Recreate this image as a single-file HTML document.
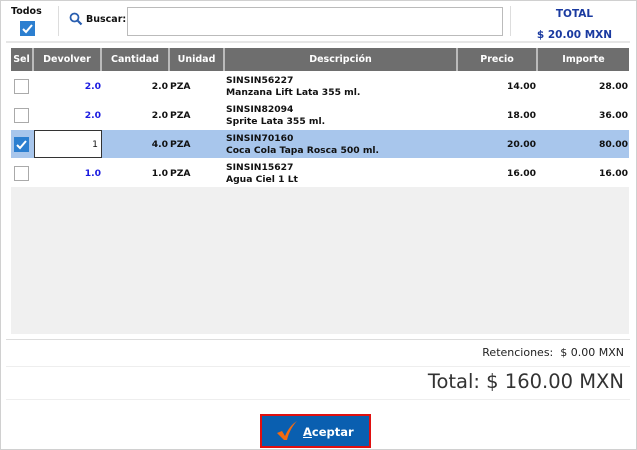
<!DOCTYPE html>
<html><head><meta charset="utf-8"><style>
*{margin:0;padding:0;box-sizing:border-box}
body{width:637px;height:450px;background:#fff;font-family:"DejaVu Sans","Liberation Sans",sans-serif;font-weight:bold;font-size:9.2px;color:#111;position:relative;overflow:hidden;border:1px solid #d0d0d0}
.a{position:absolute;white-space:nowrap}
.hd{background:#6e6e6e;color:#fff;text-align:center;top:47px;height:23px;line-height:23px;font-size:9.5px;border-right:2px solid #bbb}
.cb{width:15px;height:15px;border:1px solid #aaa;background:#fff}
.cbk{background:#2c7fd0;border-color:#2c7fd0}
.r{text-align:right}
</style></head><body>
<div class="a" style="left:10px;top:5px;font-size:9.5px">Todos</div>
<div class="a cb cbk" style="left:19px;top:20px"><svg width="13" height="13" viewBox="0 0 13 13"><path d="M2 7l3 3 6-7" stroke="#fff" stroke-width="2" fill="none"/></svg></div>
<div class="a" style="left:57px;top:5px;width:1px;height:30px;background:#ddd"></div>
<svg class="a" style="left:68px;top:11px" width="14" height="14" viewBox="0 0 14 14"><circle cx="5.5" cy="5.5" r="4" stroke="#2a5fb0" stroke-width="1.8" fill="none"/><path d="M8.5 8.5l4 4" stroke="#2a5fb0" stroke-width="2.2"/></svg>
<div class="a" style="left:85px;top:13px;font-size:9.5px">Buscar:</div>
<div class="a" style="left:126px;top:6px;width:376px;height:29px;border:1px solid #bbb"></div>
<div class="a" style="left:509px;top:5px;width:1px;height:30px;background:#ddd"></div>
<div class="a" style="left:510px;top:3px;width:127px;text-align:center;color:#1a3aa0;font-size:10.5px;line-height:21px">TOTAL<br>$ 20.00 MXN</div>
<div class="a" style="left:5px;top:40px;width:624px;height:2px;background:#e6e6e6"></div>

<div class="a hd" style="left:10px;width:23px">Sel</div>
<div class="a hd" style="left:33px;width:68px">Devolver</div>
<div class="a hd" style="left:101px;width:68px">Cantidad</div>
<div class="a hd" style="left:169px;width:55px">Unidad</div>
<div class="a hd" style="left:224px;width:233px">Descripción</div>
<div class="a hd" style="left:457px;width:80px">Precio</div>
<div class="a hd" style="left:537px;width:91px;border-right:none">Importe</div>

<div class="a" style="left:10px;top:129px;width:618px;height:28px;background:#a8c6ec"></div>
<div class="a" style="left:10px;top:186px;width:618px;height:147px;background:#f0f0f0"></div>

<div class="a cb" style="left:13px;top:78px"></div>
<div class="a cb" style="left:13px;top:107px"></div>
<div class="a cb cbk" style="left:13px;top:136px"><svg width="13" height="13" viewBox="0 0 13 13"><path d="M2 7l3 3 6-7" stroke="#fff" stroke-width="2" fill="none"/></svg></div>
<div class="a cb" style="left:13px;top:165px"></div>

<div class="a r" style="left:33px;width:67px;top:80px;color:#1a1ae0">2.0</div>
<div class="a r" style="left:33px;width:67px;top:109px;color:#1a1ae0">2.0</div>
<div class="a" style="left:33px;top:129px;width:68px;height:28px;background:#fff;border:1px solid #333;text-align:right;padding:8px 3px 0 0;font-weight:normal">1</div>
<div class="a r" style="left:33px;width:67px;top:167px;color:#1a1ae0">1.0</div>

<div class="a r" style="left:101px;width:66px;top:80px">2.0</div>
<div class="a r" style="left:101px;width:66px;top:109px">2.0</div>
<div class="a r" style="left:101px;width:66px;top:138px">4.0</div>
<div class="a r" style="left:101px;width:66px;top:167px">1.0</div>
<div class="a" style="left:169px;top:80px">PZA</div>
<div class="a" style="left:169px;top:109px">PZA</div>
<div class="a" style="left:169px;top:138px">PZA</div>
<div class="a" style="left:169px;top:167px">PZA</div>

<div class="a" style="left:225px;top:74px;line-height:12px">SINSIN56227<br>Manzana Lift Lata 355 ml.</div>
<div class="a" style="left:225px;top:103px;line-height:12px">SINSIN82094<br>Sprite Lata 355 ml.</div>
<div class="a" style="left:225px;top:132px;line-height:12px">SINSIN70160<br>Coca Cola Tapa Rosca 500 ml.</div>
<div class="a" style="left:225px;top:161px;line-height:12px">SINSIN15627<br>Agua Ciel 1 Lt</div>

<div class="a r" style="left:457px;width:78px;top:80px">14.00</div>
<div class="a r" style="left:457px;width:78px;top:109px">18.00</div>
<div class="a r" style="left:457px;width:78px;top:138px">20.00</div>
<div class="a r" style="left:457px;width:78px;top:167px">16.00</div>
<div class="a r" style="left:537px;width:90px;top:80px">28.00</div>
<div class="a r" style="left:537px;width:90px;top:109px">36.00</div>
<div class="a r" style="left:537px;width:90px;top:138px">80.00</div>
<div class="a r" style="left:537px;width:90px;top:167px">16.00</div>

<div class="a" style="left:5px;top:338px;width:624px;height:1px;background:#ddd"></div>
<div class="a r" style="left:300px;width:323px;top:345px;font-weight:normal;font-size:11px;color:#222">Retenciones:&nbsp;&nbsp;$ 0.00 MXN</div>
<div class="a" style="left:5px;top:365px;width:624px;height:1px;background:#eee"></div>
<div class="a r" style="left:300px;width:323px;top:369px;font-weight:normal;font-size:19.5px;color:#333">Total: $ 160.00 MXN</div>
<div class="a" style="left:5px;top:398px;width:624px;height:1px;background:#eee"></div>
<div class="a" style="left:259px;top:413px;width:111px;height:34px;border:2px solid #e01010;background:#0a5fb0;padding:2px">
<div style="border:1px solid #0a5fb0;height:100%;position:relative">
<svg class="a" style="left:11px;top:2px" width="22" height="22" viewBox="0 0 22 22"><path d="M1 12l5 -2 3 5c3-7 7-12 12-15c-3 3-8 10-10 19h-3z" fill="#f26a10"/></svg>
<div class="a" style="left:38px;top:6px;color:#fff;font-size:11.5px"><u>A</u>ceptar</div></div></div>
</body></html>
